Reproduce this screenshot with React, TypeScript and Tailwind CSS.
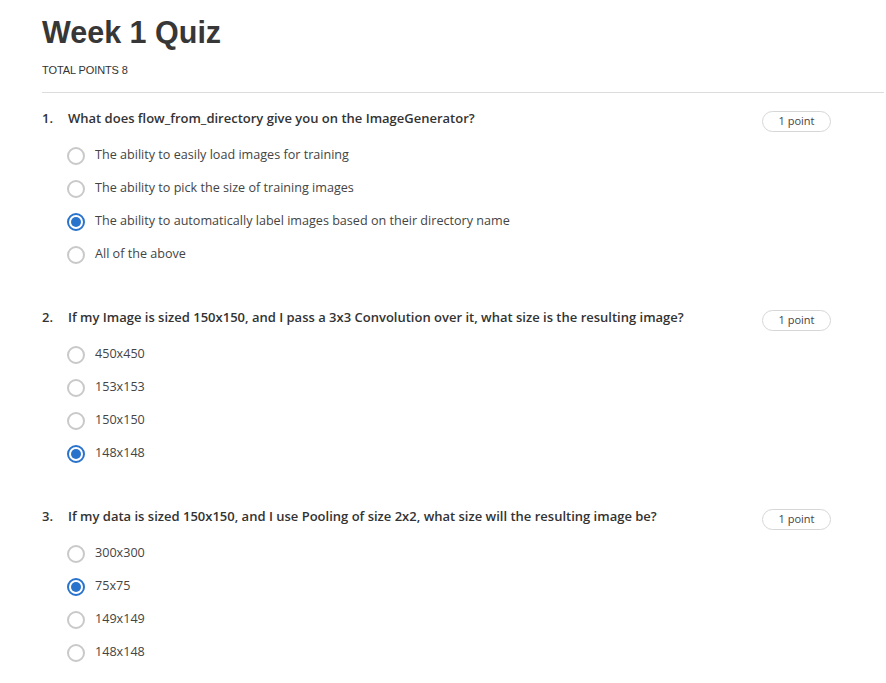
const questions = [
	{
		q: "What does flow_from_directory give you on the ImageGenerator?",
		options: [
			"The ability to easily load images for training",
			"The ability to pick the size of training images",
			"The ability to automatically label images based on their directory name",
			"All of the above",
		],
		answer: 2,
	},
	{
		q: "If my Image is sized 150x150, and I pass a 3x3 Convolution over it, what size is the resulting image?",
		options: ["450x450", "153x153", "150x150", "148x148"],
		answer: 3,
	},
	{
		q: "If my data is sized 150x150, and I use Pooling of size 2x2, what size will the resulting image be?",
		options: ["300x300", "75x75", "149x149", "148x148"],
		answer: 1,
	},
];

const Radio = ({ checked }: { checked: boolean }) =>
	checked ? (
		<span className="w-[18px] h-[18px] rounded-full border-2 border-[#2a73cc] flex items-center justify-center shrink-0">
			<span className="w-[10px] h-[10px] rounded-full bg-[#2a73cc]" />
		</span>
	) : (
		<span className="w-[18px] h-[18px] rounded-full border-2 border-[#c9c9c9] shrink-0" />
	);

export default function App() {
	return (
		<div className="bg-white min-h-screen pl-[42px] pr-[2px] pt-[14px] text-[#333]">
			{/* 헤더 */}
			<h1
				className="text-[30.5px] font-bold leading-[36px] text-[#373737]"
				style={{ fontFamily: '"Liberation Sans", Arial, sans-serif' }}
			>
				Week 1 Quiz
			</h1>
			<p
				className="mt-[12px] text-[11px] leading-[16px] text-[#333] tracking-[-0.1px]"
				style={{ fontFamily: '"Liberation Sans", Arial, sans-serif' }}
			>
				TOTAL POINTS 8
			</p>
			<div className="mt-[14px] h-px bg-[#dcdcdc]" />

			{/* 질문 */}
			<div style={{ fontFamily: '"Open Sans", sans-serif' }}>
				{questions.map((item, i) => (
					<div key={i} className="pt-[15px] pb-[21px]">
						<div className="flex items-start">
							<span className="w-[26px] text-[13px] font-semibold leading-[20px]">{i + 1}.</span>
							<span className="flex-1 text-[13px] font-semibold leading-[20px]">
								{item.q}
							</span>
							<span className="mr-[53px] mt-[3px] h-[21px] w-[69px] rounded-full border border-[#d6d6d6] text-[11px] text-[#444] flex items-center justify-center">
								1 point
							</span>
						</div>
						<div className="mt-[7px] pl-[25px] flex flex-col">
							{item.options.map((o, j) => (
								<div key={j} className="h-[33px] flex items-center gap-[10px]">
									<Radio checked={j === item.answer} />
									<span className="text-[12.6px] text-[#444]">{o}</span>
								</div>
							))}
						</div>
					</div>
				))}
			</div>
		</div>
	);
}
